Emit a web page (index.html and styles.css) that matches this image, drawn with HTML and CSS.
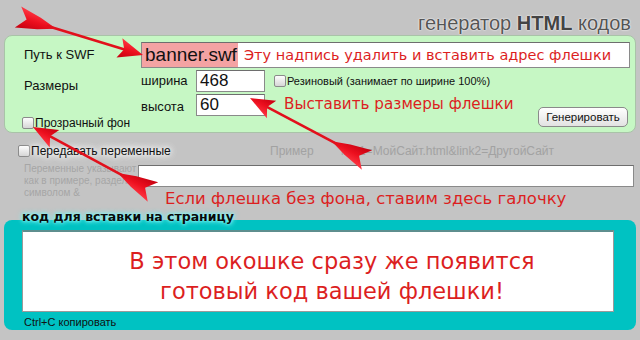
FILE: index.html
```html
<!DOCTYPE html>
<html lang="ru">
<head>
<meta charset="utf-8">
<title>генератор HTML кодов</title>
<link rel="stylesheet" href="styles.css">
</head>
<body>
<div class="page">
  <header class="head">
    <h1 class="title">генератор <b>HTML</b> кодов</h1>
  </header>

  <section class="green">
    <div class="lbl lbl-path">Путь к SWF</div>
    <div class="field field-path">
      <span class="swf">banner.swf</span>
      <span class="note note-path">Эту надпись удалить и вставить адрес флешки</span>
    </div>

    <div class="lbl lbl-size">Размеры</div>
    <div class="sub">ширина</div>
    <div class="field field-num">468</div>
    <label class="chk chk-rubber"><input type="checkbox" class="box"><span>Резиновый (занимает по ширине 100%)</span></label>

    <div class="sub sub-h">высота</div>
    <div class="field field-num">60</div>
    <div class="note note-size">Выставить размеры флешки</div>
    <div class="btn-cell"><button class="btn">Генерировать</button></div>

    <label class="chk chk-transp"><input type="checkbox" class="box"><span>Прозрачный фон</span></label>
  </section>

  <section class="vars">
    <div class="vars-row">
      <label class="chk chk-vars"><input type="checkbox" class="box"><span>Передавать переменные</span></label>
      <div class="example">Пример <span class="ex-code">link1=МойСайт.html&amp;link2=ДругойСайт</span></div>
    </div>
    <div class="vars-row vars-input-row">
      <div class="hint">Переменные указывают<br>как в примере, разделяя<br>символом &amp;</div>
      <div class="field field-vars"></div>
    </div>
    <div class="note note-bg">Если флешка без фона, ставим здесь галочку</div>
  </section>

  <section class="code">
    <div class="code-label">код для вставки на страницу</div>
    <div class="code-box">
      <p class="code-note">В этом окошке сразу же появится<br>готовый код вашей флешки!</p>
    </div>
    <div class="copy">Ctrl+C копировать</div>
  </section>

  <svg class="arrows" width="640" height="340" viewBox="0 0 640 340" aria-hidden="true">
    <defs>
      <linearGradient id="ag" x1="0" y1="0" x2="0" y2="1">
        <stop offset="0" stop-color="#ff3a46"/>
        <stop offset="0.5" stop-color="#ec0f1e"/>
        <stop offset="1" stop-color="#c40010"/>
      </linearGradient>
    </defs>
    <g transform="translate(18 17) rotate(16.9)">
      <polygon points="0,-11 22,-6 40,0 22,6 0,11 9,0" fill="url(#ag)"/>
      <line x1="30" y1="0" x2="114" y2="0" stroke="#e2101c" stroke-width="2.6"/>
      <polygon points="130.6,0 106,-10 111,0 106,10" fill="url(#ag)"/>
    </g>
    <g transform="translate(367 160) rotate(-152.1)">
      <polygon points="0,-11 22,-6 40,0 22,6 0,11 9,0" fill="url(#ag)"/>
      <line x1="30" y1="0" x2="116" y2="0" stroke="#e2101c" stroke-width="2.6"/>
      <polygon points="132.4,0 108,-10 113,0 108,10" fill="url(#ag)"/>
    </g>
    <g transform="translate(153 192) rotate(-151.6)">
      <polygon points="0,-11 22,-6 40,0 22,6 0,11 9,0" fill="url(#ag)"/>
      <line x1="30" y1="0" x2="120" y2="0" stroke="#e2101c" stroke-width="2.6"/>
      <polygon points="136.5,0 112,-10 117,0 112,10" fill="url(#ag)"/>
    </g>
  </svg>
</div>
</body>
</html>
```

FILE: styles.css
```css
* { box-sizing: border-box; }
html, body { margin: 0; padding: 0; }
body {
  background: #c4c4c4;
  font-family: "Liberation Sans", Arial, sans-serif;
  color: #111;
}
.page {
  position: relative;
  width: 640px;
  height: 340px;
  overflow: hidden;
  background: #c4c4c4;
}

/* header */
.head {
  height: 35px;
  display: flex;
  justify-content: flex-end;
  align-items: flex-end;
  padding-right: 9px;
}
.title {
  margin: 0;
  font-size: 20px;
  line-height: 20px;
  font-weight: normal;
  color: #555;
  text-shadow: 0 0 2px #fff, 0 0 1px #fff;
  padding-bottom: 2px;
}
.title b { font-weight: bold; color: #444; }

/* green panel */
.green {
  margin: 0 4px;
  height: 98px;
  background: #c6f7c4;
  border: 1px solid #a9c3a8;
  border-radius: 8px;
  padding: 6px 5px 2px 19px;
  display: grid;
  grid-template-columns: 117px 55px 69px 1fr 92px;
  grid-template-rows: 26px 22px 22px 12px;
  row-gap: 2px;
}
.lbl { font-size: 13px; line-height: 16px; }
.lbl-path { grid-column: 1; grid-row: 1; align-self: center; }
.lbl-size { grid-column: 1; grid-row: 2 / 4; padding-top: 8px; }
.field {
  background: #fff;
  border: 1px solid #8a8a8a;
  border-top-color: #6e6e6e;
  font-size: 17px;
  display: flex;
  align-items: center;
}
.field-path { grid-column: 2 / -1; grid-row: 1; padding: 0; overflow: hidden; }
.swf {
  align-self: stretch;
  display: flex;
  align-items: center;
  width: 96px;
  background: #f4a3a3;
  font-size: 19px;
  padding-left: 3px;
  color: #111;
}
.note {
  font-family: "DejaVu Sans", Verdana, sans-serif;
  color: #dc1f1f;
  white-space: nowrap;
}
.note-path { font-size: 14.5px; margin-left: 6px; }
.sub { grid-column: 2; font-size: 13px; line-height: 22px; }
.sub-h { grid-row: 3; padding-top: 2px; }
.field-num { padding-left: 3px; font-size: 17px; }
.chk {
  display: flex;
  align-items: center;
  gap: 1px;
  font-size: 12px;
  white-space: nowrap;
}
.box {
  -webkit-appearance: none;
  appearance: none;
  margin: 0;
  width: 12px;
  height: 12px;
  border: 1px solid #8b8b8b;
  border-radius: 2px;
  background: linear-gradient(#fdfdfd, #d6d6d6);
  flex: none;
}
.chk-rubber { grid-column: 4 / 6; grid-row: 2; margin-left: 9px; font-size: 11px; }
.note-size { grid-column: 4; grid-row: 3; margin-left: 19px; font-size: 15.2px; line-height: 18px; margin-top: 1px; }
.btn-cell { grid-column: 5; grid-row: 3 / 5; display: flex; justify-content: flex-end; align-items: flex-end; padding-bottom: 3px; padding-right: 2px; }
.btn {
  width: 90px;
  height: 20px;
  margin: 0;
  padding: 0;
  border: 1px solid #8a8a8a;
  border-radius: 5px;
  background: linear-gradient(#ffffff, #e2e2e2);
  font-family: "Liberation Sans", Arial, sans-serif;
  font-size: 11.5px;
  color: #111;
}
.chk-transp { grid-column: 1 / 4; grid-row: 4; margin-left: -2px; margin-top: -3px; }

/* variables area */
.vars {
  height: 87px;
  padding: 12px 6px 0 18px;
}
.vars-row { display: flex; align-items: flex-start; }
.chk-vars {
  width: 252px;
  height: 12px;
  text-shadow: 0 0 4px #fff, 0 0 8px #fff, 0 0 10px #fff;
}
.example {
  font-size: 12px;
  line-height: 12px;
  color: #a2a2a2;
  white-space: nowrap;
}
.ex-code { margin-left: 24px; }
.vars-input-row { margin-top: 8px; height: 22px; }
.hint {
  width: 120px;
  padding-left: 6px;
  margin-top: -2px;
  font-size: 10px;
  line-height: 12px;
  color: #a6a6a6;
  white-space: nowrap;
}
.field-vars { flex: 1; height: 22px; }
.note-bg { margin: 2px 0 0 147px; font-size: 16.5px; line-height: 20px; }

/* code panel */
.code {
  position: relative;
  margin: 0 4px;
  height: 110px;
  background: #00c2c2;
  border-radius: 8px;
  padding: 10px 22px 0 18px;
}
.code-label {
  position: absolute;
  left: 18px;
  top: -11px;
  font-family: "DejaVu Sans", Verdana, sans-serif;
  font-weight: bold;
  font-size: 12.5px;
  line-height: 16px;
  color: #0a0a0a;
  text-shadow: 0 0 3px #8ff, 0 0 5px #7ee, 0 0 6px #7ee;
  white-space: nowrap;
}
.code-box {
  height: 82px;
  background: #fff;
  border: 1px solid #9a9a9a;
  border-top: 2px solid #5e8e8e;
  padding: 14px 0 0 28px;
}
.code-note {
  margin: 0;
  text-align: center;
  font-family: "DejaVu Sans", Verdana, sans-serif;
  font-size: 22.5px;
  line-height: 30px;
  color: #dc1f1f;
}
.copy {
  margin: 3px 0 0 2px;
  font-size: 11px;
  line-height: 14px;
  color: #111;
}

/* arrows overlay */
.arrows {
  position: absolute;
  left: 0;
  top: 0;
  pointer-events: none;
}
```
